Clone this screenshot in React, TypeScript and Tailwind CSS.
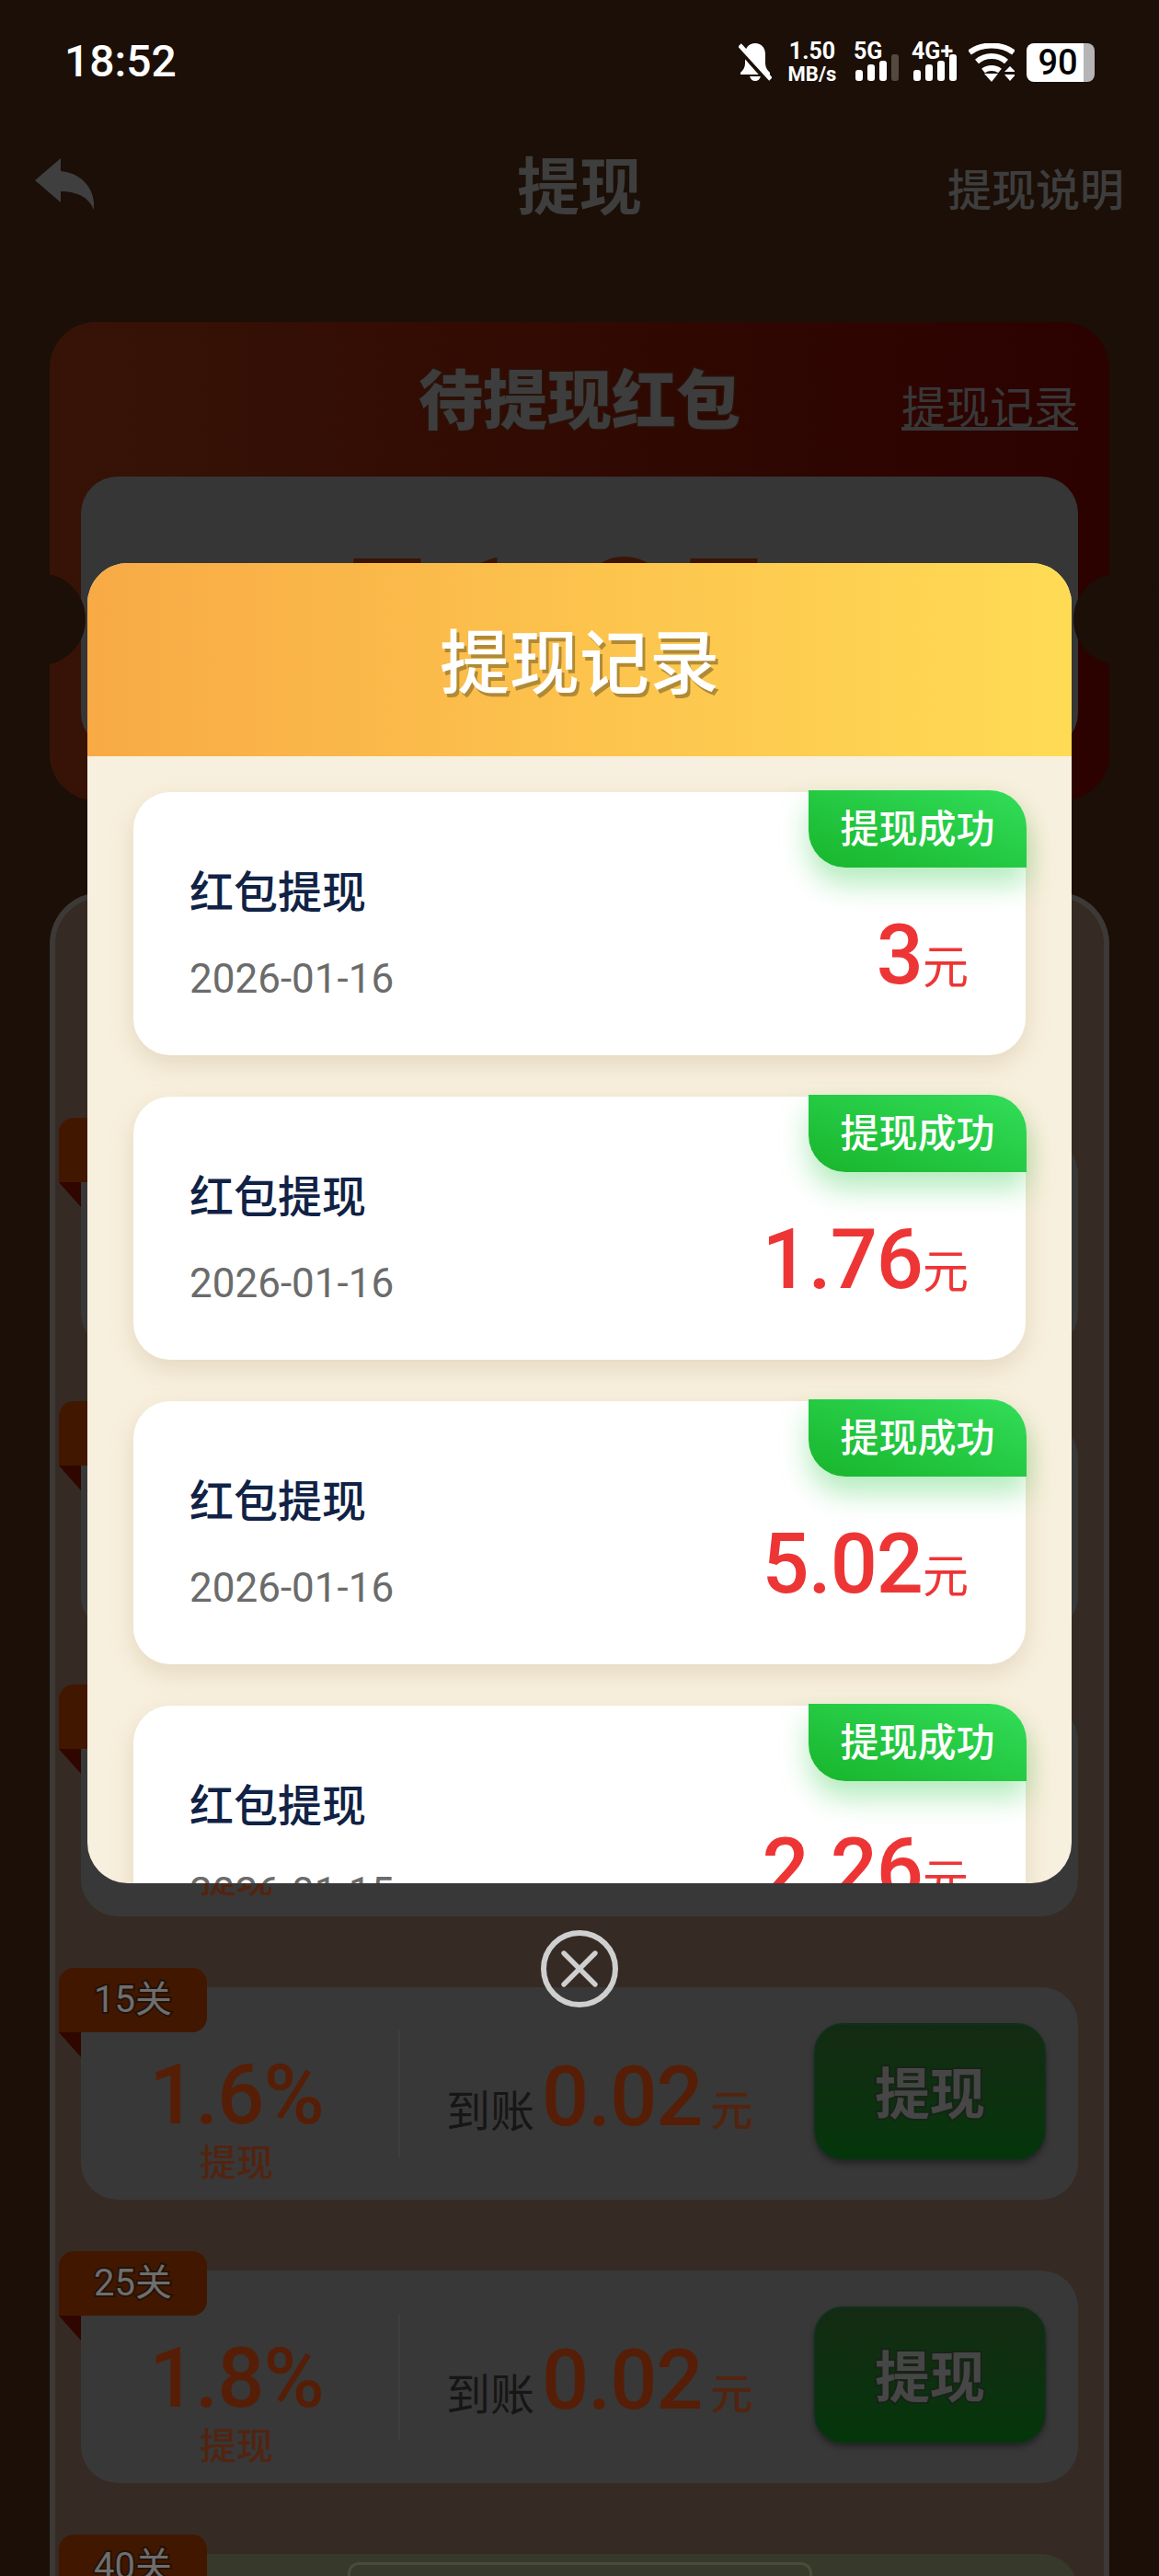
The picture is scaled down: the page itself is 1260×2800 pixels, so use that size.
import { X } from 'lucide-react';

const records = [
  { amount: '3', date: '2026-01-16' },
  { amount: '1.76', date: '2026-01-16' },
  { amount: '5.02', date: '2026-01-16' },
  { amount: '2.26', date: '2026-01-15' },
];

const levels = [
  { tag: '1关', rate: '0.8%', money: '0.01' },
  { tag: '3关', rate: '1.2%', money: '0.02' },
  { tag: '8关', rate: '1.4%', money: '0.02' },
  { tag: '15关', rate: '1.6%', money: '0.02' },
  { tag: '25关', rate: '1.8%', money: '0.02' },
];

function Signal({ on }: { on: number }) {
  const heights = [12, 18, 22, 29];
  return (
    <div className="flex items-end gap-[5px] h-[29px]">
      {heights.map((h, i) => (
        <div
          key={i}
          className={i < on ? 'w-[8px] rounded-[3px] bg-white' : 'w-[8px] rounded-[3px] bg-[#54493f]'}
          style={{ height: h }}
        />
      ))}
    </div>
  );
}

function StatusBar() {
  return (
    <div className="h-[140px] pl-[70px] pr-[70px] pt-[43px] flex justify-between items-start text-white">
      <span className="text-[48px] leading-[48px] font-medium">18:52</span>
      <div className="flex items-start pt-[4px]">
        <svg width="36" height="41" viewBox="0 0 36 41" fill="white">
          <path d="M18 0c-7 0-11 5-11 12v10c0 4-2 7-5 10v2h32v-2c-3-3-5-6-5-10V12C29 5 25 0 18 0z" />
          <path d="M12 36h12c-1 3-3 5-6 5s-5-2-6-5z" />
          <path d="M0 5 L31 40" stroke="#1b0f07" strokeWidth="6" />
          <path d="M1 2 L35 39" stroke="white" strokeWidth="5" />
        </svg>
        <div className="ml-[16px] w-[56px] flex flex-col items-center font-bold">
          <span className="text-[25px] leading-[18px]">1.50</span>
          <span className="text-[22px] leading-[18px] mt-[7px]">MB/s</span>
        </div>
        <div className="ml-[17px] relative w-[48px] h-[41px]">
          <span className="absolute left-0 top-0 text-[25px] leading-[17px] font-bold">5G</span>
          <div className="absolute left-[2px] bottom-0">
            <Signal on={3} />
          </div>
        </div>
        <div className="ml-[15px] relative w-[48px] h-[41px]">
          <span className="absolute left-0 top-0 text-[25px] leading-[17px] font-bold whitespace-nowrap">4G+</span>
          <div className="absolute left-[2px] bottom-0">
            <Signal on={4} />
          </div>
        </div>
        <svg className="ml-[14px]" width="50" height="42" viewBox="0 0 50 42" fill="none" stroke="white" strokeWidth="6">
          <path d="M1 10 C14 0 36 0 49 10" />
          <path d="M9 20 C18 12 32 12 41 20" />
          <path d="M16 30 C21 26 29 26 34 30" />
          <path d="M17 33 H32 L25 42 Z" fill="white" stroke="none" />
          <path d="M39 31 L45 25 L51 31 Z" fill="white" stroke="none" />
          <path d="M39 34 H51 L45 41 Z" fill="white" stroke="none" />
        </svg>
        <div className="ml-[13px] w-[74px] h-[42px] flex">
          <div className="w-[62px] h-[42px] bg-white rounded-l-[8px] flex items-center justify-center text-black text-[38px] font-medium">
            <span className="-mr-[6px]">90</span>
          </div>
          <div className="w-[12px] h-[42px] bg-[#b5b5b5] rounded-r-[8px]" />
        </div>
      </div>
    </div>
  );
}

function LevelRow({ tag, rate, money }: { tag: string; rate: string; money: string }) {
  return (
    <div className="relative h-[231px] bg-[#383838] rounded-[40px] flex items-start">
      <LevelTag tag={tag} />
      <div className="w-[338px] mr-[7px] pt-[68px] flex flex-col items-center text-[#561e06]">
        <span className="text-[90px] leading-[100px] font-medium tracking-[-1px]">{rate}</span>
        <span className="text-[40px] leading-[48px] font-medium text-[#522410]">提现</span>
      </div>
      <div className="mt-[47px] w-[2px] h-[138px] bg-[#3e3e3e]" />
      <div className="ml-[50px] pt-[70px] w-[400px] flex items-baseline">
        <span className="text-[48px] leading-[100px] text-[#161616] translate-y-[2px]">到账</span>
        <span className="ml-[8px] text-[90px] leading-[100px] font-medium tracking-[-1px] text-[#561e06]">{money}</span>
        <span className="ml-[9px] text-[46px] leading-[100px] font-medium text-[#522410]">元</span>
      </div>
      <div className="mt-[39px] w-[252px] h-[149px] rounded-[32px] border-2 border-[#113018] bg-gradient-to-b from-[#132b13] to-[#04360a] shadow-[0_4px_6px_rgba(0,0,0,0.35)] flex items-center justify-center pt-[8px]">
        <span className="text-[60px] font-bold text-[#464646] [-webkit-text-stroke:4px_#162416] [paint-order:stroke_fill]">提现</span>
      </div>
    </div>
  );
}

function LevelTag({ tag }: { tag: string }) {
  return (
    <>
      <div className="absolute -left-[24px] -top-[21px] w-[161px] h-[70px] bg-[#421700] rounded-t-[16px] rounded-br-[16px] flex items-center justify-center">
        <span className="text-[40px] text-[#6e6e6e] [-webkit-text-stroke:4px_#241208] [paint-order:stroke_fill]">{tag}</span>
      </div>
      <svg className="absolute -left-[24px] top-[49px]" width="24" height="27" viewBox="0 0 24 27">
        <path d="M0 0H24V27Z" fill="#2f0600" />
      </svg>
    </>
  );
}

function RecordCard({ amount, date }: { amount: string; date: string }) {
  return (
    <div className="relative shrink-0 h-[286px] bg-white rounded-[40px] shadow-[0_10px_28px_rgba(150,120,70,0.2)] flex justify-between pl-[61px] pr-[62px]">
      <div className="absolute -right-[1px] -top-[2px] w-[237px] h-[84px] rounded-tr-[40px] rounded-bl-[40px] bg-gradient-to-tr from-[#17b52b] to-[#32de58] shadow-[0_18px_30px_rgba(40,200,70,0.35)] flex items-center justify-center text-white text-[42px] font-medium">
        提现成功
      </div>
      <div className="pt-[78px]">
        <div className="text-[48px] leading-[64px] font-medium text-[#102245]">红包提现</div>
        <div className="text-[44px] leading-[60px] mt-[31px] text-[#6b6b6b]">{date}</div>
      </div>
      <div className="pt-[123px] flex items-baseline text-[#ee3535]">
        <span className="text-[90px] leading-[110px] font-medium tracking-[-1px]">{amount}</span>
        <span className="text-[50px] leading-[110px]">元</span>
      </div>
    </div>
  );
}

export default function App() {
  return (
    <div className="relative w-[1260px] h-[2800px] overflow-hidden bg-[#1b0f07] font-['Roboto','Noto_Sans_CJK_SC',sans-serif]">
      <StatusBar />

      <div className="h-[120px] px-[38px] grid grid-cols-[1fr_auto_1fr] items-center">
        <svg width="64" height="56" viewBox="0 0 64 56" fill="#3f3f3f">
          <path d="M0 24 L28 0 V14 C50 16 66 32 64 56 C58 42 46 36 28 36 V48 Z" />
        </svg>
        <span className="text-[68px] font-bold text-[#3e3e3e] pt-[10px]">提现</span>
        <span className="justify-self-end text-[48px] font-medium text-[#3d3d3d] pt-[16px]">提现说明</span>
      </div>

      <div className="relative mt-[90px] mx-[54px] h-[520px] rounded-[50px] bg-gradient-to-r from-[#371307] to-[#2b0200] px-[34px] pt-[52px]">
        <div className="relative h-[116px] flex justify-center">
          <span className="text-[70px] leading-[70px] font-black text-[#3d3d3d] [-webkit-text-stroke:3px_#2b1208] [paint-order:stroke_fill]">待提现红包</span>
          <span className="absolute right-0 top-[12px] text-[48px] leading-[60px] text-[#383838] underline underline-offset-[4px]">提现记录</span>
        </div>
        <div className="h-[297px] rounded-[40px] bg-[#363636] flex justify-center pt-[56px] pr-[60px] overflow-hidden">
          <span className="text-[182px] leading-[200px] font-bold text-[#3a1505]">51.05</span>
        </div>
        <div className="absolute -left-[61px] top-[273px] w-[100px] h-[100px] rounded-full bg-[#1b0f07]" />
        <div className="absolute -right-[61px] top-[273px] w-[100px] h-[100px] rounded-full bg-[#1b0f07]" />
      </div>

      <div className="mt-[100px] mx-[54px] h-[1900px] rounded-t-[56px] border-x-[6px] border-t-[6px] border-[#3c3936] bg-[#362a24] px-[28px] pt-[260px]">
        <div className="flex flex-col gap-[77px]">
          {levels.map(l => (
            <LevelRow key={l.tag} {...l} />
          ))}
          <div className="relative h-[231px] bg-[#37392a] rounded-[40px] flex justify-center pt-[9px]">
            <LevelTag tag="40关" />
            <div className="w-[505px] h-[32px] rounded-[12px] border-[3px] border-[#4a4c3a]" />
          </div>
        </div>
      </div>

      {/* modal */}
      <div className="absolute inset-0 flex flex-col items-center pt-[612px]">
        <div className="w-[1070px] h-[1435px] rounded-[44px] overflow-hidden bg-[#f8f0de] flex flex-col">
          <div className="h-[210px] shrink-0 bg-gradient-to-r from-[#f8aa45] to-[#ffdb55] flex items-center justify-center pt-[10px]">
            <span className="text-[76px] font-medium text-white [text-shadow:3px_4px_0_#b08a35]">提现记录</span>
          </div>
          <div className="flex flex-col gap-[45px] px-[50px] pt-[39px]">
            {records.map((r, i) => (
              <RecordCard key={i} amount={r.amount} date={r.date} />
            ))}
          </div>
        </div>
        <div className="mt-[51px] w-[84px] h-[84px] rounded-full border-[6px] border-[#cfcfcf] flex items-center justify-center">
          <X size={68} color="#cfcfcf" strokeWidth={1.9} />
        </div>
      </div>
    </div>
  );
}
